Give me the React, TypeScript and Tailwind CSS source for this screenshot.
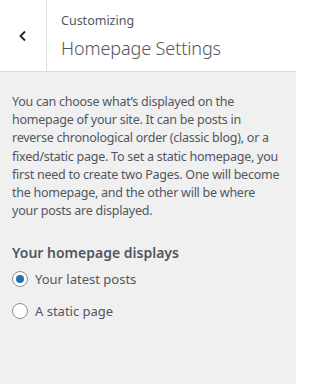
import React from "react";

export default function App() {
  return (
    <div className="w-[296px] h-[384px] bg-[#f0f0f1] text-[#50575e] overflow-hidden" style={{ fontFamily: '"Noto Sans", "Open Sans", sans-serif' }}>
      <div className="flex h-[72px] bg-white border-b border-[#dcdcde]">
        <button className="w-[47px] shrink-0 flex items-center justify-center border-r border-[#dcdcde] text-[#1d2327]">
          <svg width="12" height="14" viewBox="0 0 12 14" fill="none">
            <path d="M8 2.5 L3.5 7 L8 11.5" stroke="currentColor" strokeWidth="1.8" />
          </svg>
        </button>
        <div className="flex flex-col pl-[14px] pt-[12px]">
          <span className="text-[12.5px] leading-[18px] text-[#50575e]">Customizing</span>
          <span className="text-[18px] leading-[28px] font-light text-[#50575e] mt-[4px] tracking-[-0.1px]">Homepage Settings</span>
        </div>
      </div>
      <div className="px-[12px] pt-[21px]">
        <p className="text-[12.5px] leading-[18.2px] tracking-[-0.25px] text-[#50575e] whitespace-nowrap">
          You can choose what’s displayed on the<br />
          homepage of your site. It can be posts in<br />
          reverse chronological order (classic blog), or a<br />
          fixed/static page. To set a static homepage, you<br />
          first need to create two Pages. One will become<br />
          the homepage, and the other will be where<br />
          your posts are displayed.
        </p>
        <div className="mt-[23px] text-[14px] leading-[20px] font-semibold text-[#50575e]">Your homepage displays</div>
        <div className="mt-[6px] flex flex-col gap-[12px]">
          <label className="flex items-center gap-[7px] text-[13px] leading-[20px]">
            <span className="w-[16px] h-[16px] rounded-full border border-[#8c8f94] bg-white flex items-center justify-center">
              <span className="w-[8px] h-[8px] rounded-full bg-[#2271b1]" />
            </span>
            Your latest posts
          </label>
          <label className="flex items-center gap-[7px] text-[13px] leading-[20px]">
            <span className="w-[16px] h-[16px] rounded-full border border-[#8c8f94] bg-white" />
            A static page
          </label>
        </div>
      </div>
    </div>
  );
}
